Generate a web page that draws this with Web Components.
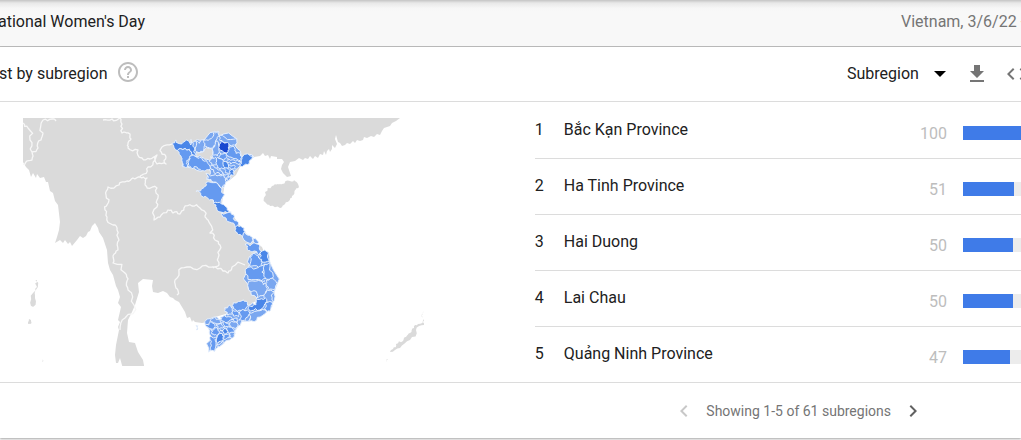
<!DOCTYPE html>
<html lang="en">
<head>
<meta charset="utf-8">
<title>Interest by subregion</title>
<style>
html,body{margin:0;height:100%}
body{background:#fafafa;font:16px/24px Roboto,"Liberation Sans",sans-serif;color:#212121;overflow:hidden}
</style>
</head>
<body>
<trends-page></trends-page>
<script>
function define(name, html, setup) {
  const template = document.createElement('template');
  template.innerHTML = html;
  customElements.define(name, class extends HTMLElement {
    constructor() {
      super();
      this.attachShadow({ mode: 'open' }).append(template.content.cloneNode(true));
    }
    connectedCallback() { if (setup) setup(this, this.shadowRoot); }
  });
}

// Adds a bent midpoint to each edge of an outline. The bend depends only on
// the two end points, so that neighbours keep sharing one border.
function roughen(d, amount) {
  return d.match(/M[^M]+/g).map(part => {
    const closed = part.endsWith('Z');
    const n = part.match(/-?[\d.]+/g).map(Number);
    const points = [];
    for (let i = 0; i < n.length; i += 2) points.push([n[i], n[i + 1]]);
    const out = [];
    points.forEach((p, i) => {
      out.push(p.join(' '));
      if (i === points.length - 1 && !closed) return;
      const q = points[(i + 1) % points.length];
      const [a, b] = p[0] < q[0] || (p[0] === q[0] && p[1] < q[1]) ? [p, q] : [q, p];
      const h = Math.sin(a[0] * 12.9 + a[1] * 78.2 + b[0] * 37.7 + b[1] * 4.6) * 43758;
      const bend = (h - Math.floor(h) - .5) * amount;
      out.push((a[0] + b[0]) / 2 - (b[1] - a[1]) * bend + ' ' + ((a[1] + b[1]) / 2 + (b[0] - a[0]) * bend));
    });
    return 'M' + out.join('L') + (closed ? 'Z' : '');
  }).join('');
}

define('term-bar', `
<style>
:host{display:flex;justify-content:space-between;align-items:center;box-sizing:border-box;height:47px;padding-bottom:3px;overflow:hidden;
 background:linear-gradient(#c4c4c4,#e8e8e8 3px,#f6f6f6 8px,#f8f8f8 12px);border-bottom:1px solid #bdbdbd}
.term{margin-left:-2px}
.range{flex:none;width:120px;white-space:nowrap;color:#757575}
</style>
<span class="term"><slot></slot></span><span class="range"><slot name="range"></slot></span>`);

define('icon-button', `
<style>
:host{display:block;flex:none}
button{display:block;width:100%;margin:0;padding:0;border:0;background:none;color:inherit;overflow:hidden;cursor:pointer}
svg{display:block;width:24px;height:24px;fill:currentColor}
</style>
<button><svg viewBox="0 0 24 24" aria-hidden="true"><path/></svg></button>`, (host, root) => {
  const icons = {
    help: 'M11 18h2v-2h-2v2zm1-16C6.480 2 2 6.480 2 12s4.480 10 10 10 10-4.480 10-10S17.520 2 12 2zm0 18c-4.410 0-8-3.590-8-8s3.590-8 8-8 8 3.590 8 8-3.590 8-8 8zm0-14c-2.210 0-4 1.790-4 4h2c0-1.100.9-2 2-2s2 .9 2 2c0 2-3 1.750-3 5h2c0-2.250 3-2.500 3-5 0-2.210-1.790-4-4-4z',
    download: 'M19 9h-4V3H9v6H5l7 7 7-7zM5 18v2h14v-2H5z',
    code: 'M9.400 16.600L4.800 12l4.600-4.600L8 6l-6 6 6 6 1.400-1.400zm5.200 0l4.600-4.600-4.600-4.600L16 6l6 6-6 6-1.400-1.400z',
    prev: 'M15.410 7.410L14 6l-6 6 6 6 1.410-1.410L10.830 12z',
    next: 'M10 6L8.590 7.410 13.170 12l-4.580 4.590L10 18l6-6z'
  };
  root.querySelector('path').setAttribute('d', icons[host.getAttribute('icon')]);
  const button = root.querySelector('button');
  button.setAttribute('aria-label', host.getAttribute('label'));
  button.disabled = host.hasAttribute('disabled');
});

define('resolution-select', `
<style>
:host{display:flex;align-items:center;position:relative}
select{appearance:none;border:0;margin:0;padding:0 28px 0 0;background:none;font:inherit;color:inherit;height:24px;width:100px}
svg{position:absolute;right:1px;top:9px;pointer-events:none}
</style>
<select aria-label="Resolution"><option>Subregion</option><option>Metro</option><option>City</option></select>
<svg width="12" height="6" viewBox="0 0 12 6" aria-hidden="true"><path d="M0 0h12L6 6z"/></svg>`);

define('widget-header', `
<style>
:host{display:flex;align-items:center;box-sizing:border-box;height:55px;border-bottom:1px solid #dcdcdc;overflow:hidden}
h2{margin:0 0 0 -1px;font:inherit}
.help{color:#bdbdbd;width:24px;margin-left:8px;margin-bottom:4px}
.tools{margin-left:auto;display:flex;align-items:center;gap:16px;color:#757575}
resolution-select{color:#212121}
.download{width:24px;margin-left:2px}
.code{width:16px}
</style>
<h2><slot></slot></h2>
<icon-button class="help" icon="help" label="Help"></icon-button>
<div class="tools">
<resolution-select></resolution-select>
<icon-button class="download" icon="download" label="Download CSV"></icon-button>
<icon-button class="code" icon="code" label="Embed"></icon-button>
</div>`);

define('geo-map', `
<style>
:host{display:block}
svg{display:block;width:402px;max-width:100%;height:auto}
.land{fill:#dadada}
.line{fill:none;stroke:#f7f7f7;stroke-width:1.300;stroke-linejoin:round}
.vn{stroke:#e6effc;stroke-width:3;stroke-linejoin:round}
.a{fill:#7aa7f0}.b{fill:#659af0}.c{fill:#4a86e8}.d{fill:#1a48d0}.g{fill:#dadada}
</style>
<svg viewBox="23 118 402 248" role="img" aria-label="Map of Vietnam subregions">
<path class="land" d="M13 108H412L400 118 396 121 392 123 390 126 384 128 382 131 380 135 377 134 374 137 371 136 367 138 364 137 363 140 360 141 357 140 355 143 353 141 350 144 347 143 345 145 342 146 340 143 338 142 336 135 335 139 337 144 335 148 332 145 332 149 330 152 329 149 327 151 326 155 324 151 323 155 320 154 318 158 315 156 313 159 310 156 308 159 305 158 303 160 299 158 295 161 290 162 288 167 290 173 291 176 287 177 283 173 281 169 282 165 284 162 282 159 277 159 277 157 271 156 270 159 268 155 265 156 263 153 260 156 254 157 245 164 240 167 236 175 230 180 225 182 223 195 222 204 232 214 240 226 250 238 262 247 268 262 262 285 258 300 240 310 215 317 207 322 202 323 195 322 193 320 192 322 190 317 187 318 185 312 182 307 179 302 175 300 173 298 170 297 167 293 163 291 158 293 153 292 152 286 153 280 143 279 138 283 139 292 135 305 132 312 128 320 127 333 129 342 135 343 138 352 143 360 146 376H125L120 358 118 363 116 363 115 355 116 345 119 330 118 327 120 322 118 320 121 307 118 303 120 297 118 290 116 286 113 275 110 270 108 263 107 250 103 238 99 232 98 228 95 223 92 226 90 231 88 232 86 236 83 238 80 236 77 240 72 246 70 242 68 244 65 240 63 243 60 240 55 243 57 237 59 230 60 222 58 205 55 201 53 193 50 191 48 182 46 182 44 177 40 178 37 174 36 178 33 173 31 177 29 170 26 167 23 162 13 160Z"/>
<g class="land rough">
<path d="M265 192L272 186 278 184 282 184 290 181 294 180 298 184 299 187 295 190 292 196 289 201 284 205 280 208 270 206 266 203Z"/>
<path d="M35 280L37 280 37 287 35 295 33 307 31 306 33 293ZM29 319L31 320 30 324 28 323Z"/>
<path d="M390 352L393 349 396 344 403 341 406 337 410 333 414 328 418 324 424 319 424 325 416 330 410 340 400 348ZM421 316L424 311 423 318ZM386 360L388 359 387 362ZM42 359L44 361 42 362Z"/>
</g>
<g class="rough"><path class="line" d="M23 123L28 128 30 140 32 152 32 160 26 162 23 164M32 152L38 148 41 140 43 133 43 120 52 119 56 121M103 120L112 119 120 118 122 124 122 133 130 134 131 139 128 143 128 148 138 150 142 158 150 159 157 155 155 160 148 167 144 174 140 177 133 178 127 181 119 185 108 187 106 195 107 205 105 210 107 217 113 225 117 230 119 240 118 250 113 256 113 263 125 273 127 281 128 290 134 305 125 318 120 330M157 155L157 164 166 164 166 157 162 154 162 147 172 144M140 177L147 178 145 184 147 188 157 188 158 198 157 207 154 220 160 217 168 210 173 213 180 214 184 208 192 206 200 208 205 216 208 220 210 233 215 240 220 245 219 255 219 265 213 268M177 295L176 288 175 280 179 273 187 267 200 268 212 267 223 271 228 273 232 267 245 265"/></g>
<g class="vn rough" transform="translate(160 120) scale(.33333)">
<path class="a" d="M106 62L132 60 160 36 176 34 178 48 230 56 226 78 248 112 282 112 250 136 226 150 222 164 204 184 190 204 140 178 150 150 100 144 66 138 84 88Z"/>
<path class="c" d="M36 70L48 60 65 72 80 60 92 75 93 58 104 84 108 102 98 104 88 88 62 86 52 92Z"/>
<path class="b" d="M52 92L62 86 88 88 96 106 80 122 84 138 68 140 66 115 58 104Z"/>
<path class="a" d="M106 62L118 70 130 60 132 85 118 98 106 92Z"/>
<path class="a" d="M132 60L148 58 160 38 172 34 178 48 168 60 158 85 142 82 134 76Z"/>
<path class="a" d="M178 48L195 52 230 56 228 72 210 76 200 68 180 62Z"/>
<path class="a" d="M158 85L170 62 176 68 178 95 172 108 158 104Z"/>
<path class="b" d="M208 80L224 84 228 100 248 112 240 122 222 116 204 108 200 98Z"/>
<path class="b" d="M180 98L198 100 200 112 188 124 176 116Z"/>
<path class="c" d="M246 112L282 110 268 124 252 136 240 138 244 122Z"/>
<path class="b" d="M202 116L222 120 242 124 238 134 212 132 200 126Z"/>
<path class="b" d="M90 108L108 110 120 112 140 122 150 138 148 150 130 152 112 142 96 146 84 140 86 124Z"/>
<path class="g" d="M108 98L118 98 140 82 158 90 156 108 150 122 130 114 108 110Z"/>
<path class="a" d="M152 110L166 112 170 132 156 136 148 124Z"/>
<path class="b" d="M172 112L190 126 192 146 180 148 170 134Z"/>
<path class="a" d="M150 140L160 136 182 150 186 164 166 162Z"/>
<path class="c" d="M192 124L204 130 206 142 194 142Z"/>
<path class="b" d="M206 134L220 136 226 146 214 150Z"/>
<path class="c" d="M208 154L220 150 224 162 212 166Z"/>
<path class="b" d="M194 146L206 146 210 158 196 158Z"/>
<path class="a" d="M188 160L204 162 206 172 192 174ZM206 168L214 172 206 182 196 178Z"/>
<path class="a" d="M138 160L166 164 188 166 196 180 190 196 186 206 160 186 142 178Z"/>
<path class="b" d="M108 214L124 208 134 200 140 186 160 188 186 206 184 240 186 252 160 240 140 232 122 226Z"/>
<path class="c" d="M160 250L184 252 202 264 214 276 190 278 170 264Z"/>
<path class="d" d="M178 72L182 70 186 64 192 69 206 70 208 88 196 98 182 92Z"/>
</g>
<g class="vn rough" transform="translate(180 210) scale(.33333)">
<path class="a" d="M76 346L100 322 134 318 134 294 190 270 206 286 230 284 230 264 206 240 204 172 208 140 242 126 266 128 286 236 276 282 262 304 206 334 170 350 166 372 150 390 126 404 104 424 86 426 92 378Z"/>
<path class="b" d="M124 8L152 6 160 26 174 46 166 52 148 36 134 22Z"/>
<path class="c" d="M166 52L182 48 196 66 188 80 172 70 165 60Z"/>
<path class="a" d="M194 66L214 80 220 94 204 98 190 86ZM216 84L232 92 234 100 220 98Z"/>
<path class="b" d="M196 102L222 98 240 108 246 124 238 136 216 126 202 118Z"/>
<path class="c" d="M242 126L266 128 268 154 246 156 238 144Z"/>
<path class="b" d="M208 140L222 130 236 144 246 158 236 172 208 168Z"/>
<path class="b" d="M204 172L236 172 254 164 258 206 246 212 204 208Z"/>
<path class="b" d="M254 162L270 158 280 200 260 208Z"/>
<path class="a" d="M260 210L282 208 286 236 268 240 256 224Z"/>
<path class="a" d="M206 214L246 214 262 236 252 256 230 264 222 242 206 240Z"/>
<path class="a" d="M262 240L284 244 276 270 276 280 258 272Z"/>
<path class="c" d="M206 286L228 284 232 268 256 264 254 282 240 300 214 302 204 296Z"/>
<path class="b" d="M256 278L278 282 272 300 262 304 254 296Z"/>
<path class="a" d="M206 308L240 302 256 298 260 306 232 322 206 334Z"/>
<path class="b" d="M160 278L190 270 202 282 196 298 172 304 160 296Z"/>
<path class="a" d="M134 294L148 286 158 296 158 312 144 316 134 304Z"/>
<path class="b" d="M178 306L202 300 206 314 196 336 176 330Z"/>
<path class="b" d="M160 302L174 306 176 320 160 318ZM120 322L146 320 172 324 172 336 146 334 124 332Z"/>
<path class="a" d="M104 322L118 328 122 340 100 338 90 334ZM108 344L124 338 132 352 116 358ZM150 338L172 338 174 352 156 354Z"/>
<path class="b" d="M76 346L92 336 104 344 104 354 90 356ZM128 336L148 338 150 350 134 352ZM92 358L108 352 118 364 110 376 96 372Z"/>
<path class="c" d="M120 360L136 354 146 364 134 374ZM112 380L128 372 130 388 114 400Z"/>
<path class="b" d="M140 354L158 356 166 366 150 370ZM92 378L110 380 108 398 104 424 86 426 92 400ZM130 376L146 372 148 384 132 388Z"/>
<path class="a" d="M148 372L164 370 158 384ZM110 402L130 392 126 404 110 408Z"/>
<path class="b" d="M48 346L54 347 53 358 49 359Z"/>
<path class="c" d="M246 216L254 212 257 220 250 224Z"/>
</g>
</svg>`, (host, root) => {
  for (const path of root.querySelectorAll('.rough path')) {
    const d = path.getAttribute('d');
    path.setAttribute('d', roughen(roughen(d, .6), .6));
  }
});

define('region-row', `
<style>
:host{display:grid;grid-template-columns:29px 1fr 60px 58px;align-items:center;box-sizing:border-box;height:56px;padding-bottom:2px;border-bottom:1px solid #dcdcdc}
:host(:last-of-type){border-bottom-color:transparent}
.value{color:#bdbdbd;text-align:right;padding:8px 16px 0 0}
.clip{overflow:hidden;margin-top:6px}
.track{width:100px;height:14px;background:#ececec}
.fill{height:100%;background:#3f7be8}
</style>
<span class="rank"></span><span><slot></slot></span><span class="value"></span>
<div class="clip"><div class="track"><div class="fill"></div></div></div>`, (host, root) => {
  const value = host.getAttribute('value');
  root.querySelector('.rank').textContent = host.getAttribute('rank');
  root.querySelector('.value').textContent = value;
  root.querySelector('.fill').style.width = value + '%';
});

define('list-pager', `
<style>
:host{display:flex;justify-content:flex-end;align-items:center;gap:10px;box-sizing:border-box;height:56px;padding-right:96px;border-top:1px solid #dcdcdc;
 font-size:14px;color:#757575}
icon-button{width:24px;color:#616161}
icon-button[disabled]{color:#c8c8c8}
</style>
<icon-button icon="prev" label="Previous" disabled></icon-button>
<span><slot></slot></span>
<icon-button icon="next" label="Next"></icon-button>`);

define('trends-page', `
<style>
:host{display:block}
section{background:#fff;box-shadow:0 1px 2px #0005}
.body{display:grid;grid-template-columns:11fr 10fr;height:280px}
geo-map{padding:16px 0 0 23px}
.list{padding-top:1px}
</style>
<term-bar>ational Women's Day<span slot="range">Vietnam, 3/6/22 -</span></term-bar>
<section>
<widget-header>st by subregion</widget-header>
<div class="body">
<geo-map></geo-map>
<div class="list">
<region-row rank="1" value="100">Bắc Kạn Province</region-row>
<region-row rank="2" value="51">Ha Tinh Province</region-row>
<region-row rank="3" value="50">Hai Duong</region-row>
<region-row rank="4" value="50">Lai Chau</region-row>
<region-row rank="5" value="47">Quảng Ninh Province</region-row>
</div>
</div>
<list-pager>Showing 1-5 of 61 subregions</list-pager>
</section>`);
</script>
</body>
</html>
